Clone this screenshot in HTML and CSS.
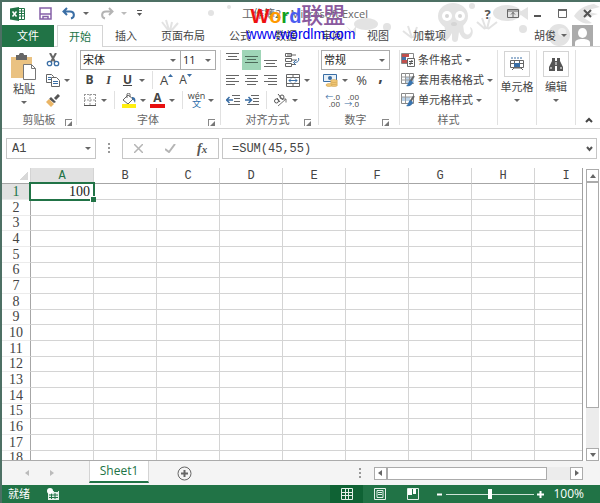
FILE: index.html
```html
<!DOCTYPE html>
<html lang="zh-CN">
<head>
    <meta charset="UTF-8">
    <meta name="viewport" content="width=device-width, initial-scale=1.0">
    <title>工作簿2 - Microsoft Excel</title>
    <link rel="stylesheet" href="styles.css">
</head>
<body>
    <div class="window">
        <header class="header">
            <svg class="doodles" width="440" height="46" viewBox="0 0 440 46" fill="#e3e3e3">
                <path d="M2 20l6 8M6 18l3 10M12 20l-2 9M18 21l-7 8" stroke="#e3e3e3" stroke-width="2"/>
                <circle cx="51" cy="11" r="3"/><circle cx="69" cy="5" r="2"/>
                <ellipse cx="206" cy="22" rx="12" ry="6"/><circle cx="227" cy="25" r="4"/>
                <path d="M186 24l6 5 4-5v10l-5-4z"/>
                <ellipse cx="293" cy="14" rx="15" ry="13"/>
                <path d="M284 22h19l1 8c3 4 6 3 7-1l-1-4c4 1 4 10-2 12-5 1-7-3-9-7l-1 7c0 4-6 4-6 0v-6l-3 5c-4 5-11 3-11-2 0-4 5-4 5-1 3 0 2-6 1-11z"/>
                <g fill="#fff"><circle cx="287" cy="14" r="5"/><circle cx="300" cy="14" r="5"/></g>
                <g fill="#d5d5d5"><circle cx="287" cy="14" r="2"/><circle cx="300" cy="14" r="2"/><ellipse cx="294" cy="22" rx="3" ry="2"/></g>
                <path d="M243 29l9 7M248 24l4 12M257 25l-4 11M263 30l-9 6M317 20l8 7M322 16l4 11M330 15l-3 12M337 20l-9 7" stroke="#e3e3e3" stroke-width="2"/>
                <circle cx="312" cy="4" r="3"/><circle cx="363" cy="27" r="4"/>
                <ellipse cx="347" cy="11" rx="14" ry="8"/><path d="M358 11l10-6v13z"/>
                <circle cx="399" cy="33" r="11"/><circle cx="402" cy="30" r="4" fill="#efefef"/>
                <path d="M414 14c5-8 12-11 20-12l6 3-16 4 14 3-14 4 8 5c-7 2-13-1-18-7z"/>
            </svg>

            <div class="titlebar">
                <div class="quick">
                    <svg class="logo" width="15" height="14" viewBox="0 0 15 14">
                        <path d="M8 1.500h6.500v11H8" fill="#fff" stroke="#217346"/>
                        <path d="M9 4h5M9 6.500h5M9 9h5M11.500 2v10" stroke="#217346"/>
                        <path d="M0 1.500L9 0v14L0 12.500z" fill="#217346"/>
                        <path d="M2.500 4.500l4 5M6.500 4.500l-4 5" stroke="#fff" stroke-width="1.500"/>
                    </svg>
                    <button class="quick-btn" aria-label="保存">
                        <svg width="13" height="13" viewBox="0 0 13 13" fill="none" stroke="#8560a8" stroke-width="1.500"><path d="M1 1h11v11H1z"/><path d="M1 7h11M4 12V9.500h5V12" /></svg>
                    </button>
                    <button class="quick-btn" aria-label="撤消">
                        <svg width="14" height="13" viewBox="0 0 14 13" fill="none" stroke="#3a6ea5" stroke-width="2"><path d="M5 1L1.500 4.500 5 8M2 4.500h6c5 0 5 6 1 7"/></svg>
                    </button>
                    <span class="arrow"></span>
                    <button class="quick-btn redo" aria-label="恢复">
                        <svg width="14" height="13" viewBox="0 0 14 13" fill="none" stroke="#b4b4b4" stroke-width="2"><path d="M9 1l3.500 3.500L9 8M12 4.500H6c-5 0-5 6-1 7"/></svg>
                    </button>
                    <span class="arrow faded"></span>
                    <button class="quick-btn more" aria-label="自定义快速访问工具栏">
                        <svg width="7" height="7" viewBox="0 0 7 7"><path d="M1 .5h5" stroke="#555"/><path d="M1 3h5L3.500 6z" fill="#555"/></svg>
                    </button>
                </div>
                <h1 class="title">工作簿2 - Microsoft Excel</h1>
                <div class="controls">
                    <button aria-label="帮助"><b>?</b></button>
                    <button aria-label="功能区显示选项">
                        <svg width="12" height="9" viewBox="0 0 12 9" fill="none" stroke="#666"><path d="M.5.5h11v8H.5zM.5 2h11M6 3v5M4 5.500L6 3.500l2 2"/></svg>
                    </button>
                    <button aria-label="最小化">
                        <svg width="9" height="9" viewBox="0 0 9 9"><path d="M1 7h7" stroke="#555" stroke-width="2"/></svg>
                    </button>
                    <button aria-label="最大化">
                        <svg width="9" height="9" viewBox="0 0 9 9" fill="none" stroke="#666"><path d="M.5 1.500h8v7h-8z"/><path d="M0 1h9" stroke-width="2"/></svg>
                    </button>
                    <button aria-label="关闭">
                        <svg width="9" height="9" viewBox="0 0 9 9" stroke="#555" stroke-width="2"><path d="M1 1l7 7M8 1L1 8"/></svg>
                    </button>
                </div>
            </div>

            <nav class="tabs">
                <button class="tab file">文件</button>
                <button class="tab active">开始</button>
                <button class="tab">插入</button>
                <button class="tab">页面布局</button>
                <button class="tab">公式</button>
                <button class="tab">数据</button>
                <button class="tab">审阅</button>
                <button class="tab">视图</button>
                <button class="tab">加载项</button>
                <button class="user">胡俊 <span class="arrow"></span>
                    <svg width="21" height="21" viewBox="0 0 21 21"><path d="M0 0h21v21H0z" fill="#ababab"/><ellipse cx="10.500" cy="8" rx="4.500" ry="5" fill="#fff"/><path d="M3 21v-3c0-3 3-4 7.500-4s7.500 1 7.500 4v3z" fill="#fff"/></svg>
                </button>
            </nav>

            <div class="watermark">
                <div class="brand"><span class="red">W</span><span class="orange">o</span><span class="green">r</span><span class="blue">d</span><span class="purple">联盟</span></div>
                <div class="site">www.wordlm.com</div>
            </div>
        </header>

        <section class="ribbon">
            <div class="group clipboard">
                <div class="group-body">
                    <button class="paste">
                        <svg width="26" height="28" viewBox="0 0 26 28">
                            <path d="M0 4h21v21H0z" fill="#eac282"/><path d="M5 2h3c0-3 5-3 5 0h3v5H5z" fill="#666"/>
                            <path d="M12.500 11.500h8l4 4v11h-12z" fill="#fff" stroke="#777"/><path d="M20.500 11.500v4h4" fill="none" stroke="#777"/>
                        </svg>
                        粘贴
                        <span class="arrow"></span>
                    </button>
                    <div class="clip-tools">
                        <div class="row"><button class="btn" aria-label="剪切">
                            <svg width="14" height="14" viewBox="0 0 14 14" fill="none"><path d="M4 0l5 9M10 0L5 9" stroke="#666" stroke-width="2"/><circle cx="3.500" cy="10.500" r="2.200" stroke="#3a6ea5" stroke-width="1.300"/><circle cx="10.500" cy="10.500" r="2.200" stroke="#3a6ea5" stroke-width="1.300"/></svg>
                        </button></div>
                        <div class="row"><button class="btn" aria-label="复制">
                            <svg width="14" height="13" viewBox="0 0 14 13" fill="#fff" stroke="#666"><path d="M.5.5h5l2 2v6h-7z"/><path d="M5.500 3.500h5l3 3v6h-8z"/><path d="M2 3.500h3M2 5.500h3M7 7.500h5M7 9.500h5" stroke="#3a6ea5"/></svg>
                        </button><span class="arrow"></span></div>
                        <div class="row"><button class="btn" aria-label="格式刷">
                            <svg width="14" height="13" viewBox="0 0 14 13"><path d="M13 1L9 5" stroke="#555" stroke-width="3"/><path d="M5 3l5 5-2 1-5-4z" fill="#555"/><path d="M3 5l5 5-3 3-5-5z" fill="#eab566"/></svg>
                        </button></div>
                    </div>
                </div>
                <footer class="caption">剪贴板<button class="launcher" aria-label="剪贴板选项"></button></footer>
            </div>

            <div class="group font">
                <div class="row">
                    <label class="combo font-name"><select aria-label="字体"><option>宋体</option></select></label>
                    <label class="combo font-size"><select aria-label="字号"><option>11</option></select></label>
                </div>
                <div class="row">
                    <button class="btn"><b>B</b></button>
                    <button class="btn italic">I</button>
                    <button class="btn underline">U</button>
                    <span class="arrow"></span>
                    <span class="divider"></span>
                    <button class="btn grow" aria-label="增大字号">A<svg width="5" height="3" viewBox="0 0 5 3"><path d="M0 3l2.500-3L5 3z" fill="#3a6ea5"/></svg></button>
                    <button class="btn shrink" aria-label="减小字号">A<svg width="5" height="3" viewBox="0 0 5 3"><path d="M0 0l2.500 3L5 0z" fill="#3a6ea5"/></svg></button>
                </div>
                <div class="row">
                    <button class="btn" aria-label="边框">
                        <svg width="12" height="12" viewBox="0 0 12 12" stroke="#999" fill="none"><path d="M.5 0v11M6 0v11M11.500 0v11M0 .5h12M0 6h12" stroke-dasharray="2 1"/><path d="M0 11.500h12" stroke="#555"/></svg>
                    </button>
                    <span class="arrow"></span>
                    <span class="divider"></span>
                    <button class="btn" aria-label="填充颜色">
                        <svg width="16" height="15" viewBox="0 0 16 15"><path d="M7 2l5 4-5 5-5-4z" fill="#fff" stroke="#666"/><path d="M6 5V1c0-1 3-1 3 0v3" fill="none" stroke="#666"/><path d="M11 4c3 0 4 2 3 6-1-2-1-3-3-4z" fill="#3a6ea5"/><path d="M1 11h14v4H1z" fill="#ffee10"/></svg>
                    </button>
                    <span class="arrow"></span>
                    <button class="btn font-color" aria-label="字体颜色">A</button>
                    <span class="arrow"></span>
                    <span class="divider"></span>
                    <button class="btn pinyin"><span>wén</span><span class="hanzi">文</span></button>
                    <span class="arrow"></span>
                </div>
                <footer class="caption">字体<button class="launcher" aria-label="字体设置"></button></footer>
            </div>

            <div class="group align">
                <div class="row">
                    <button class="btn" aria-label="顶端对齐"><svg width="13" height="18" viewBox="0 0 13 18" stroke="#666"><path d="M0 2.500h13M2 5.500h9M0 8.500h13"/></svg></button>
                    <button class="btn pressed" aria-label="垂直居中"><svg width="13" height="18" viewBox="0 0 13 18" stroke="#4d6b5a"><path d="M0 5.500h13M2 8.500h9M0 11.500h13"/></svg></button>
                    <button class="btn" aria-label="底端对齐"><svg width="13" height="18" viewBox="0 0 13 18" stroke="#666"><path d="M0 9.500h13M2 12.500h9M0 15.500h13"/></svg></button>
                    <button class="btn wide" aria-label="自动换行">
                        <svg width="15" height="14" viewBox="0 0 15 14" fill="none" stroke="#666"><path d="M.5.500h6v3h-6zM.5 5.500h6v3h-6zM.5 10.500h6v3h-6zM2 2h9"/><path d="M7 7h5M7 11.500h3" /><path d="M13.500 5c1 3-1 4.500-4 4.500M11 7L8.500 9.500 11 12" stroke="#3a6ea5"/></svg>
                    </button>
                </div>
                <div class="row">
                    <button class="btn" aria-label="左对齐"><svg width="13" height="10" viewBox="0 0 13 10" stroke="#666"><path d="M0 .5h13M0 3.500h9M0 6.500h13M0 9.500h9"/></svg></button>
                    <button class="btn" aria-label="居中"><svg width="13" height="10" viewBox="0 0 13 10" stroke="#666"><path d="M0 .5h13M2 3.500h9M0 6.500h13M2 9.500h9"/></svg></button>
                    <button class="btn" aria-label="右对齐"><svg width="13" height="10" viewBox="0 0 13 10" stroke="#666"><path d="M0 .5h13M4 3.500h9M0 6.500h13M4 9.500h9"/></svg></button>
                    <button class="btn wide" aria-label="合并后居中">
                        <svg width="14" height="13" viewBox="0 0 14 13" fill="none" stroke="#666"><path d="M.5.500h13v12H.5zM0 3.500h14M0 9.500h14M7 0v3M7 10v3"/><path d="M3 6.500h8M5 4.500l-2 2 2 2M9 4.500l2 2-2 2" stroke="#3a6ea5"/></svg>
                    </button>
                    <span class="arrow"></span>
                </div>
                <div class="row">
                    <button class="btn" aria-label="减少缩进量"><svg width="14" height="10" viewBox="0 0 14 10" fill="none" stroke="#666"><path d="M6 .5h8M8 3.500h6M8 6.500h6M2 9.500h12"/><path d="M0 5h7M3.500 2L.5 5l3 3" stroke="#3a6ea5" stroke-width="1.500"/></svg></button>
                    <button class="btn" aria-label="增加缩进量"><svg width="14" height="10" viewBox="0 0 14 10" fill="none" stroke="#666"><path d="M6 .5h8M8 3.500h6M8 6.500h6M2 9.500h12"/><path d="M0 5h6M3.500 2l3 3-3 3" stroke="#3a6ea5" stroke-width="1.500"/></svg></button>
                    <span class="divider"></span>
                    <button class="btn" aria-label="方向"><svg width="15" height="14" viewBox="0 0 15 14" fill="none" stroke="#555"><circle cx="3.500" cy="8" r="2"/><path d="M4 5l3 4M5 1l5 6"/><circle cx="9" cy="4" r="2"/><path d="M5 13l8-7M9.500 6H13v3.500" stroke="#777"/></svg></button>
                    <span class="arrow"></span>
                </div>
                <footer class="caption">对齐方式<button class="launcher" aria-label="对齐设置"></button></footer>
            </div>

            <div class="group number">
                <div class="row">
                    <label class="combo format"><select aria-label="数字格式"><option>常规</option></select></label>
                </div>
                <div class="row">
                    <button class="btn" aria-label="会计数字格式">
                        <svg width="15" height="14" viewBox="0 0 15 14"><path d="M.5 1.500h13v7H.5z" fill="#e7f0f8" stroke="#3a6ea5"/><circle cx="7" cy="5" r="2" fill="#3a6ea5"/><g fill="#f2c877" stroke="#c79a4b" stroke-width=".5"><ellipse cx="11" cy="12" rx="3.500" ry="1.500"/><ellipse cx="11" cy="10" rx="3.500" ry="1.500"/><ellipse cx="11" cy="8" rx="3.500" ry="1.500"/><ellipse cx="6" cy="12" rx="3" ry="1.500"/></g></svg>
                    </button>
                    <span class="arrow"></span>
                    <button class="btn percent">%</button>
                    <button class="btn comma"><b>,</b></button>
                </div>
                <div class="row">
                    <button class="btn decimals" aria-label="增加小数位数"><span><i>←</i>.0</span><span>.00</span></button>
                    <button class="btn decimals" aria-label="减少小数位数"><span>.00</span><span><i>→</i>.0</span></button>
                </div>
                <footer class="caption">数字<button class="launcher" aria-label="数字设置"></button></footer>
            </div>

            <div class="group styles">
                <button class="row style-btn">
                    <svg width="14" height="14" viewBox="0 0 14 14"><path d="M.5.500h12v10H.5z" fill="#fff" stroke="#888"/><path d="M1 1h7v3H1z" fill="#c0504d"/><path d="M1 4h4v3H1z" fill="#4472a8"/><path d="M1 7h6v3H1z" fill="#c0504d"/><path d="M6.500 5.500h7v8h-7z" fill="#fff" stroke="#666"/><path d="M8 8.500h4M8 10.500h4M11 7l-2 5" stroke="#555"/></svg>
                    条件格式 <span class="arrow"></span>
                </button>
                <button class="row style-btn">
                    <svg width="14" height="14" viewBox="0 0 14 14"><path d="M.5.500h12v10H.5z" fill="#fff" stroke="#888"/><path d="M5 4h8v6H5z" fill="#bcd3e8"/><path d="M0 4h12M0 7h12M4.500 0v10M8.500 0v10" stroke="#999"/><path d="M13 3L9 9" stroke="#666" stroke-width="2"/><path d="M9 7l3 2c-1 4-4 5-7 4 2-1 2-4 4-6z" fill="#3a75b0"/></svg>
                    套用表格格式 <span class="arrow"></span>
                </button>
                <button class="row style-btn">
                    <svg width="14" height="14" viewBox="0 0 14 14"><path d="M.5.500h12v10H.5z" fill="#fff" stroke="#888"/><path d="M1 4h8v4H1z" fill="#bcd3e8"/><path d="M0 4h12M4.500 0v10" stroke="#999"/><path d="M13 3L9 9" stroke="#666" stroke-width="2"/><path d="M9 7l3 2c-1 4-4 5-7 4 2-1 2-4 4-6z" fill="#3a75b0"/></svg>
                    单元格样式 <span class="arrow"></span>
                </button>
                <footer class="caption">样式</footer>
            </div>

            <div class="group big">
                <button class="big-btn">
                    <span class="tile"><svg width="14" height="14" viewBox="0 0 14 14" fill="none" stroke="#666"><path d="M1 1h12" stroke="#3a6ea5" stroke-dasharray="2 1"/><path d="M.5 3.500h13v7H.5zM0 6.500h14M4.500 3v7M9.500 3v7M2 13l2-2h7l2 2"/><path d="M4 6h6v4H4z" fill="#3a6ea5" stroke="none"/></svg></span>
                    单元格
                    <span class="arrow"></span>
                </button>
            </div>
            <div class="group big">
                <button class="big-btn">
                    <span class="tile"><svg width="14" height="13" viewBox="0 0 14 13" fill="#555"><path d="M3 0h3v3h2V0h3v3l3 6v4H8V8H6v5H0V9l3-6z"/><path d="M2 9v2M12 9v2M7 4v3" stroke="#fff"/></svg></span>
                    编辑
                    <span class="arrow"></span>
                </button>
            </div>
            <button class="collapse" aria-label="折叠功能区">
                <svg width="8" height="6" viewBox="0 0 8 6" fill="none" stroke="#444" stroke-width="2"><path d="M1 5l3-3 3 3"/></svg>
            </button>
        </section>

        <section class="formula-bar">
            <label class="combo name-box"><input type="text" value="A1" aria-label="名称框"></label>
            <span class="grip"></span>
            <div class="formula-tools">
                <button aria-label="取消"><svg width="9" height="9" viewBox="0 0 9 9" stroke="#b5b5b5" stroke-width="1.500"><path d="M0 0l9 9M9 0L0 9"/></svg></button>
                <button aria-label="输入"><svg width="11" height="9" viewBox="0 0 11 9" fill="none" stroke="#b5b5b5" stroke-width="2"><path d="M0 5l4 3 6-8"/></svg></button>
                <button class="fx" aria-label="插入函数">f<small>x</small></button>
            </div>
            <div class="formula">
                <input type="text" value="=SUM(45,55)" aria-label="编辑栏">
                <button aria-label="展开编辑栏"><svg width="7" height="6" viewBox="0 0 7 6" fill="none" stroke="#555" stroke-width="2"><path d="M1 1l2.500 3L6 1"/></svg></button>
            </div>
        </section>

        <main class="sheet">
            <div class="grid">
                <table>
                    <thead><tr id="columns"><th class="corner"></th></tr></thead>
                    <tbody id="cells"></tbody>
                </table>
            </div>
            <div class="scroll vertical">
                <button aria-label="向上滚动"><span class="tri up"></span></button>
                <div class="thumb"></div>
                <div class="track"></div>
                <button aria-label="向下滚动"><span class="tri down"></span></button>
            </div>
        </main>

        <div class="sheet-bar">
            <div class="sheet-nav">
                <button aria-label="上一个工作表"><span class="tri left"></span></button>
                <button aria-label="下一个工作表"><span class="tri right"></span></button>
            </div>
            <button class="sheet-tab">Sheet1</button>
            <button class="add-sheet" aria-label="新工作表">
                <svg width="15" height="15" viewBox="0 0 15 15" fill="none" stroke="#666"><circle cx="7.500" cy="7.500" r="6.500"/><path d="M4 7.500h7M7.500 4v7" stroke-width="2"/></svg>
            </button>
            <span class="grip"></span>
            <div class="scroll horizontal">
                <button aria-label="向左滚动"><span class="tri left"></span></button>
                <div class="thumb"></div>
                <div class="track"></div>
                <button aria-label="向右滚动"><span class="tri right"></span></button>
            </div>
        </div>

        <footer class="status">
            <span>就绪</span>
            <svg class="macro" width="12" height="12" viewBox="0 0 12 12"><path d="M1 3h11v9H1z" fill="#e4f0e8"/><path d="M2 7h9M2 9.500h9M4.500 5v6M8 5v6" stroke="#217346"/><circle cx="3" cy="3" r="3" fill="#fff"/><path d="M7 3.500h4" stroke="#217346"/></svg>
            <div class="views">
                <button class="current" aria-label="普通"><svg width="12" height="12" viewBox="0 0 12 12" fill="none" stroke="#e4f0e8"><path d="M.5.500h11v11H.5zM0 4.500h12M0 7.500h12M4.500 0v12M7.500 0v12"/></svg></button>
                <button aria-label="页面布局"><svg width="12" height="12" viewBox="0 0 12 12" fill="none" stroke="#e4f0e8"><path d="M.5.500h11v11H.5zM3 2.500h6v7H3zM4 4.500h4M4 6.500h4"/></svg></button>
                <button aria-label="分页预览"><svg width="12" height="12" viewBox="0 0 12 12"><path d="M.5.500h11v11H.5z" fill="none" stroke="#e4f0e8"/><path d="M1 1h4v6H1zM6 1h3v5H6z" fill="#fff"/></svg></button>
            </div>
            <button class="zoom-btn" aria-label="缩小"><svg width="7" height="7" viewBox="0 0 7 7"><path d="M1 3.500h5" stroke="#fff" stroke-width="2"/></svg></button>
            <input type="range" min="0" max="100" value="50" aria-label="显示比例">
            <button class="zoom-btn" aria-label="放大"><svg width="7" height="7" viewBox="0 0 7 7"><path d="M0 3.500h7M3.500 0v7" stroke="#fff" stroke-width="2"/></svg></button>
            <span class="zoom">100%</span>
        </footer>
    </div>

    <script>
        const columns = ['A', 'B', 'C', 'D', 'E', 'F', 'G', 'H', 'I'];
        const values = { A1: '100' };
        const selected = 'A1';

        const head = document.getElementById('columns');
        const body = document.getElementById('cells');

        for (const col of columns) {
            const th = document.createElement('th');
            th.textContent = col;
            if (selected[0] === col) th.className = 'current';
            head.appendChild(th);
        }

        for (let row = 1; row <= 18; row++) {
            const tr = document.createElement('tr');
            const th = document.createElement('th');
            th.textContent = row;
            if (selected.slice(1) === String(row)) th.className = 'current';
            tr.appendChild(th);

            for (const col of columns) {
                const td = document.createElement('td');
                td.textContent = values[col + row] || '';
                if (selected === col + row) td.className = 'selected';
                tr.appendChild(td);
            }
            body.appendChild(tr);
        }
    </script>
</body>
</html>
```

FILE: styles.css
```css
:root {
    --green: #217346;
    --text: #444444;
    --line: #d4d4d4;
    --box: #ababab;
    --ui: "Open Sans", "Noto Sans CJK SC", sans-serif;
    --mono: "Liberation Mono", "Noto Sans CJK SC", monospace;
}

* {
    margin: 0;
    padding: 0;
    box-sizing: border-box;
}

body {
    font-family: var(--ui);
    font-size: 11px;
    line-height: 16px;
    color: var(--text);
    background: #4d7064;
}

button,
input,
select {
    font: inherit;
    color: inherit;
    background: none;
    border: none;
    outline: none;
}

svg {
    display: block;
    flex: none;
}

.window {
    display: flex;
    flex-direction: column;
    height: 100vh;
    border: solid #4d7064;
    border-width: 2px 0 0 2px;
    background: #fff;
}

.arrow {
    display: flex;
    justify-content: center;
    flex: none;
    width: 10px;
}

.arrow::before,
.combo::after {
    content: "";
    border: solid transparent;
    border-width: 3px 3px 0;
    border-top-color: #666;
}

.arrow.faded::before {
    border-top-color: #bbb;
}

/* header */
.header {
    position: relative;
    flex: none;
}

.doodles {
    position: absolute;
    right: 0;
    top: 0;
}

.titlebar,
.tabs {
    position: relative;
    display: flex;
}

.titlebar {
    height: 23px;
    align-items: center;
}

.quick,
.controls {
    flex: 1;
    display: flex;
    align-items: center;
}

.quick {
    padding-left: 8px;
}

.logo {
    margin-right: 8px;
}

.quick-btn {
    display: flex;
    justify-content: center;
    width: 24px;
}

.redo {
    margin-left: 4px;
}

.more {
    width: 20px;
}

.title {
    font-size: 11px;
    font-weight: normal;
    color: #666;
}

.controls {
    justify-content: flex-end;
}

.controls button {
    display: flex;
    justify-content: center;
    width: 25px;
}

.controls b {
    font-size: 13px;
    color: #555;
}

.tabs {
    height: 22px;
    border-bottom: 1px solid var(--line);
}

.tab {
    height: 22px;
    padding: 0 12px;
    white-space: nowrap;
}

.file {
    padding: 0 15px;
    color: #fff;
    background: var(--green);
}

.tab.active {
    margin-left: 3px;
    padding: 0 11px;
    color: var(--green);
    background: #fff;
    border: 1px solid var(--line);
    border-bottom: none;
}

.user {
    display: flex;
    align-items: center;
    gap: 3px;
    margin-left: auto;
    padding-right: 7px;
}

.watermark {
    position: absolute;
    top: 2px;
    left: 50%;
    transform: translateX(-50%);
    font-family: "Liberation Sans", "Noto Sans CJK SC", sans-serif;
    text-align: center;
    white-space: nowrap;
}

.brand {
    padding-right: 6px;
    font-size: 20px;
    line-height: 24px;
    font-weight: bold;
}

.purple {
    font-size: 22px;
    font-weight: 500;
    color: #8a5a9e;
}

.red { color: #ee1111; }
.orange { color: #ff9a00; }
.green { color: #10a020; }
.blue { color: #4a5cf0; }

.site {
    font-size: 14px;
    line-height: 12px;
    color: #0000ee;
}

/* ribbon */
.ribbon {
    display: flex;
    flex: none;
    height: 82px;
    padding-top: 3px;
    border-bottom: 1px solid var(--line);
}

.group {
    display: flex;
    flex-direction: column;
    padding: 0 3px;
    margin-bottom: 3px;
    border-right: 1px solid #e1e1e1;
}

.row {
    display: flex;
    align-items: center;
    flex: none;
    height: 20px;
}

.btn {
    display: flex;
    justify-content: center;
    align-items: center;
    flex: none;
    width: 19px;
    height: 20px;
    font-size: 12px;
}

.divider {
    width: 1px;
    height: 18px;
    margin: 0 4px 0 5px;
    background: #e1e1e1;
}

.caption {
    position: relative;
    flex: none;
    height: 18px;
    margin-top: 1px;
    line-height: 18px;
    text-align: center;
    color: #666;
}

.launcher {
    position: absolute;
    right: 1px;
    bottom: 3px;
    width: 7px;
    height: 7px;
    border: solid #888;
    border-width: 1px 0 0 1px;
}

.launcher::after {
    content: "";
    position: absolute;
    right: 0;
    bottom: 0;
    border: solid transparent;
    border-width: 0 0 5px 5px;
    border-bottom-color: #777;
}

.clipboard {
    width: 75px;
}

.group-body {
    display: flex;
    flex: none;
    height: 60px;
}

.paste {
    display: flex;
    flex-direction: column;
    align-items: center;
    width: 38px;
    padding-top: 3px;
}

.paste .arrow {
    margin-top: 4px;
}

.combo {
    position: relative;
    display: flex;
    height: 20px;
    border: 1px solid var(--box);
    background: #fff;
}

.combo select,
.combo input {
    width: 100%;
    padding-left: 2px;
    appearance: none;
    color: #222;
}

.combo::after {
    position: absolute;
    right: 4px;
    top: 8px;
}

.font {
    padding-right: 4px;
}

.font-name {
    width: 101px;
}

.font-size {
    width: 36px;
    margin-left: -1px;
}

.italic {
    font-family: "Liberation Serif", serif;
    font-style: italic;
    font-weight: bold;
}

.underline {
    font-weight: bold;
    text-decoration: underline;
}

.grow,
.shrink {
    align-items: center;
}

.grow {
    font-size: 13px;
}

.grow svg,
.shrink svg {
    margin-bottom: 10px;
}

.font-color {
    width: 15px;
    height: 15px;
    margin: 0 2px;
    font-weight: bold;
    border-bottom: 4px solid #e81010;
}

.pinyin {
    flex-direction: column;
    font-size: 9px;
    line-height: 8px;
}

.hanzi {
    color: #2b6cab;
}

.align {
    padding: 0 6px 0 2px;
}

.pressed {
    background: #9fd5b7;
}

.wide {
    margin-left: 3px;
}

.number {
    padding: 0 9px 0 2px;
}

.format {
    width: 69px;
}

.percent {
    font-size: 13px;
    margin-left: 2px;
}

.comma {
    font-size: 16px;
    padding-bottom: 8px;
}

.decimals {
    flex-direction: column;
    align-items: flex-end;
    font-size: 8px;
    line-height: 7px;
}

.decimals i {
    font-style: normal;
    color: #3a6ea5;
}

.styles {
    width: 98px;
    padding: 0 1px;
}

.style-btn {
    gap: 3px;
    white-space: nowrap;
}

.style-btn .arrow {
    width: 6px;
}

.big {
    padding: 0 1px;
}

.big-btn {
    display: flex;
    flex-direction: column;
    align-items: center;
    width: 36px;
    white-space: nowrap;
}

.big-btn .arrow {
    margin-top: 4px;
}

.tile {
    display: flex;
    justify-content: center;
    align-items: center;
    width: 26px;
    height: 26px;
    margin: 1px 0 2px;
    border: 1px solid var(--line);
}

.collapse {
    align-self: flex-end;
    margin-left: auto;
    padding: 0 7px 5px 0;
}

/* formula bar */
.formula-bar {
    display: flex;
    flex: none;
    padding: 9px 3px 9px 4px;
    font-family: var(--mono);
    font-size: 12px;
}

.name-box,
.formula-tools,
.formula {
    height: 21px;
    border: 1px solid #c6c6c6;
}

.name-box {
    width: 90px;
}

.name-box input {
    padding-left: 5px;
    color: var(--text);
}

.grip {
    width: 2px;
    height: 10px;
    background: repeating-linear-gradient(#999 0 2px, transparent 2px 4px);
}

.formula-bar .grip {
    margin: 5px 12px;
}

.formula-tools {
    display: flex;
    width: 97px;
    margin-right: 3px;
}

.formula-tools button {
    flex: 1;
    display: flex;
    justify-content: center;
    align-items: center;
}

.formula-tools .fx {
    font: italic bold 14px "Liberation Serif", serif;
    color: #555;
}

.fx small {
    font-size: 11px;
}

.formula {
    flex: 1;
    display: flex;
}

.formula input {
    flex: 1;
    min-width: 0;
    padding-left: 9px;
}

.formula button {
    padding: 0 3px;
}

/* sheet */
.sheet {
    flex: 1;
    display: flex;
    min-height: 0;
}

.grid {
    flex: 1;
    min-width: 0;
    overflow: hidden;
    border-right: 1px solid #a0a0a0;
    border-bottom: 1px solid var(--box);
}

table {
    width: 596px;
    table-layout: fixed;
    border-collapse: separate;
    border-spacing: 0;
    line-height: 14px;
}

tr {
    height: 16px;
}

tbody tr:nth-child(3n) {
    height: 15px;
}

th,
td {
    border: solid var(--line);
    border-width: 0 1px 1px 0;
}

thead th {
    font: 12px/14px var(--mono);
    border-bottom-color: #a6a6a6;
}

tbody th,
td {
    font: 14px/14px "Liberation Serif", serif;
}

tbody th {
    border-right-color: #a6a6a6;
    border-bottom-color: #ececec;
}

.corner {
    width: 29px;
    background: linear-gradient(135deg, transparent 50%, #d8d8d8 50%) 18px 4px / 8px 8px no-repeat;
}

th.current {
    color: var(--green);
    background: #e1e1e1;
}

td {
    text-align: right;
    color: #222;
}

.selected {
    position: relative;
    padding-right: 3px;
}

.selected::before,
.selected::after {
    content: "";
    position: absolute;
}

.selected::before {
    inset: -2px;
    border: 2px solid var(--green);
}

.selected::after {
    right: -3px;
    bottom: -3px;
    width: 5px;
    height: 5px;
    background: var(--green);
    border: solid #fff;
    border-width: 1px 0 0 1px;
}

.scroll {
    display: flex;
    background: #ececec;
}

.scroll button,
.thumb {
    background: #fff;
    border: 1px solid var(--box);
}

.scroll button {
    display: flex;
    justify-content: center;
    align-items: center;
    flex: none;
    width: 13px;
    height: 13px;
}

.vertical {
    flex-direction: column;
    width: 13px;
    margin: 1px 1px 0 3px;
}

.vertical .thumb {
    flex: 17;
}

.vertical .track {
    flex: 3;
}

.tri {
    display: block;
    width: 0;
    border: 3px solid transparent;
}

.up { border-width: 0 3px 4px; border-bottom-color: #666; }
.down { border-width: 4px 3px 0; border-top-color: #666; }
.left { border-width: 3px 4px 3px 0; border-right-color: #666; }
.right { border-width: 3px 0 3px 4px; border-left-color: #666; }

/* bottom bars */
.sheet-bar {
    display: flex;
    align-items: center;
    flex: none;
    height: 24px;
    padding-right: 17px;
    background: #f4f4f4;
}

.sheet-nav {
    display: flex;
    gap: 21px;
    width: 87px;
    padding-left: 23px;
}

.sheet-nav .left { border-right-color: #bbb; }
.sheet-nav .right { border-left-color: #bbb; }

.sheet-tab {
    align-self: flex-start;
    width: 60px;
    height: 22px;
    font-size: 12px;
    color: var(--green);
    background: #fff;
    border: 1px solid var(--line);
    border-top: none;
    border-bottom: 2px solid var(--green);
}

.add-sheet {
    margin-left: 28px;
}

.sheet-bar .grip {
    margin: 0 13px 0 auto;
}

.horizontal {
    width: 36%;
}

.horizontal .thumb {
    flex: 7;
}

.horizontal .track {
    flex: 1;
}

.status {
    display: flex;
    align-items: center;
    flex: none;
    height: 18px;
    padding: 0 16px 0 6px;
    color: #fff;
    background: var(--green);
}

.macro {
    margin-left: 17px;
}

.views {
    display: flex;
    margin: 0 7px 0 auto;
}

.views button {
    display: flex;
    justify-content: center;
    align-items: center;
    width: 33px;
    height: 18px;
}

.views .current {
    background: #0f6234;
}

.status input {
    appearance: none;
    width: 88px;
    height: 1px;
    margin: 0 3px;
    background: #cfe3d7;
}

.status input::-webkit-slider-thumb {
    appearance: none;
    width: 4px;
    height: 10px;
    background: #fff;
}

.zoom {
    width: 40px;
    font-size: 12px;
    text-align: right;
}
```
